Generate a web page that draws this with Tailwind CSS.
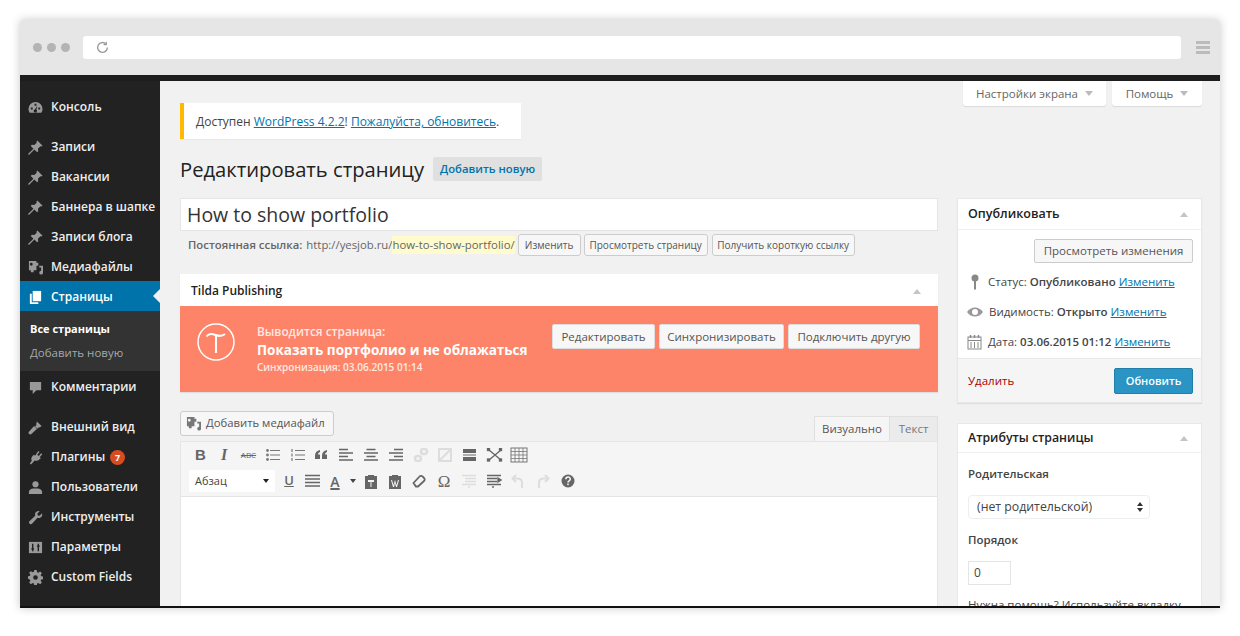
<!DOCTYPE html>
<html lang="en">
<head>
  <meta charset="UTF-8">
  <title>Редактировать страницу</title>
  <script src="https://cdn.jsdelivr.net/npm/@tailwindcss/browser@4"></script>
</head>
<body class="bg-white h-[636px] overflow-hidden font-['Open_Sans',sans-serif] text-[#444]">

  <div class="mx-5 mt-5 h-[588px] flex flex-col overflow-hidden rounded-t-[3px] border-b-2 border-[#111] shadow-[0_0_10px_rgba(0,0,0,0.22)]">

    <!-- Browser chrome -->
    <div class="h-[55px] shrink-0 bg-[#e6e6e6] flex items-center pl-[13px]">
      <div class="flex gap-[5px]">
        <span class="w-[9px] h-[9px] rounded-full bg-[#b4b4b4]"></span>
        <span class="w-[9px] h-[9px] rounded-full bg-[#b4b4b4]"></span>
        <span class="w-[9px] h-[9px] rounded-full bg-[#b4b4b4]"></span>
      </div>
      <div class="ml-[13px] w-[1098px] h-[23px] bg-white rounded-[3px] flex items-center pl-[13px]">
        <svg class="w-[13px] h-[13px]" viewBox="0 0 12 12" fill="none" stroke="#9a9a9a" stroke-width="1.300"><path d="M10.500 6a4.500 4.500 0 1 1-1.300-3.200"/><path d="M9.500 .8v2.600H7" stroke-width="1.100"/></svg>
      </div>
      <div class="ml-[15px] flex flex-col gap-[2px]">
        <span class="block w-[14px] h-[3px] bg-[#bbb]"></span>
        <span class="block w-[14px] h-[3px] bg-[#bbb]"></span>
        <span class="block w-[14px] h-[3px] bg-[#bbb]"></span>
      </div>
    </div>
    <div class="h-[6px] shrink-0 bg-[#1d1d1d]"></div>

    <div class="flex flex-1 min-h-0">
      <!-- Admin menu -->
      <nav class="w-[140px] shrink-0 bg-[#222] text-[12px] font-semibold text-[#eee] pt-[10px] whitespace-nowrap [&>a]:pt-[2px]">
        <a class="flex items-center h-[30px] pl-2 gap-[8px]">
          <svg class="w-[15px] h-[15px] shrink-0" viewBox="0 0 16 16" fill="#999"><path d="M8 2a7.500 7.500 0 0 0-7.500 7.500c0 1.600.5 3 1.300 4.200h12.400c.8-1.200 1.300-2.600 1.300-4.200A7.500 7.500 0 0 0 8 2zM7 4h2v2H7zM3 8h2v2H3zm8 0h2v2h-2zM7 13a1.500 1.500 0 0 1 .4-2.900L10 6l-1 4.500a1.500 1.500 0 0 1-2 2.500z"/></svg>
          <span>Консоль</span>
        </a>
        <div class="h-[10px]"></div>
        <a class="flex items-center h-[30px] pl-2 gap-[8px]">
          <svg class="w-[15px] h-[15px] shrink-0" viewBox="0 0 16 16" fill="#999"><path d="M10 .5l5.500 5.500-1.300 1-1-.3-2.600 2.600.3 2.600-1.200 1.200-2.900-2.900L1 16 0 15l5.800-5.800-2.900-2.900 1.200-1.200 2.600.3 2.600-2.600-.3-1z"/></svg>
          <span>Записи</span>
        </a>
        <a class="flex items-center h-[30px] pl-2 gap-[8px]">
          <svg class="w-[15px] h-[15px] shrink-0" viewBox="0 0 16 16" fill="#999"><path d="M10 .5l5.500 5.500-1.300 1-1-.3-2.600 2.600.3 2.600-1.200 1.200-2.900-2.900L1 16 0 15l5.800-5.800-2.900-2.900 1.200-1.200 2.600.3 2.600-2.600-.3-1z"/></svg>
          <span>Вакансии</span>
        </a>
        <a class="flex items-center h-[30px] pl-2 gap-[8px]">
          <svg class="w-[15px] h-[15px] shrink-0" viewBox="0 0 16 16" fill="#999"><path d="M10 .5l5.500 5.500-1.300 1-1-.3-2.600 2.600.3 2.600-1.200 1.200-2.900-2.900L1 16 0 15l5.800-5.800-2.900-2.900 1.200-1.200 2.600.3 2.600-2.600-.3-1z"/></svg>
          <span>Баннера в шапке</span>
        </a>
        <a class="flex items-center h-[30px] pl-2 gap-[8px]">
          <svg class="w-[15px] h-[15px] shrink-0" viewBox="0 0 16 16" fill="#999"><path d="M10 .5l5.500 5.500-1.300 1-1-.3-2.600 2.600.3 2.600-1.200 1.200-2.900-2.900L1 16 0 15l5.800-5.800-2.900-2.900 1.200-1.200 2.600.3 2.600-2.600-.3-1z"/></svg>
          <span>Записи блога</span>
        </a>
        <a class="flex items-center h-[30px] pl-2 gap-[8px]">
          <svg class="w-[15px] h-[15px] shrink-0" viewBox="0 0 16 16" fill="#999"><path fill-rule="evenodd" d="M1 1h8v2h2v3H9v5H6v2H3v-2H1zm2.500 2a1.500 1.500 0 1 0 0 3 1.500 1.500 0 0 0 0-3zM14 6h2v7.500a2 2 0 1 1-2-2V8h-2V6z"/></svg>
          <span>Медиафайлы</span>
        </a>
        <a class="relative flex items-center h-[30px] pl-2 gap-[8px] bg-[#0073aa] text-white">
          <svg class="w-[15px] h-[15px] shrink-0" viewBox="0 0 16 16" fill="#fff"><path d="M5 1h9v11H5z"/><path d="M2 4h2v9h7v2H2z"/></svg>
          <span>Страницы</span>
          <span class="absolute right-0 top-[8px] border-y-[7px] border-y-transparent border-r-[7px] border-r-[#f1f1f1]"></span>
        </a>
        <div class="h-[60px] bg-[#333] pl-[10px] pt-[6px]">
          <div class="h-6 leading-6 text-[11px] font-bold text-white">Все страницы</div>
          <div class="h-6 leading-6 text-[11.500px] font-normal text-[#a5a8aa]">Добавить новую</div>
        </div>
        <a class="flex items-center h-[30px] pl-2 gap-[8px]">
          <svg class="w-[15px] h-[15px] shrink-0" viewBox="0 0 16 16" fill="#999"><path d="M2 2h12v9H9l-4 4v-4H2z"/></svg>
          <span>Комментарии</span>
        </a>
        <div class="h-[10px]"></div>
        <a class="flex items-center h-[30px] pl-2 gap-[8px]">
          <svg class="w-[15px] h-[15px] shrink-0" viewBox="0 0 16 16" fill="#999"><path d="M9.500 1.500l5 5-2 1.500-1-.2-1.500 1.500-2.500-2.500 1.500-1.500-.2-1zM6.500 6.500l3 3L3 15.500 1 15l-.5-2z"/></svg>
          <span>Внешний вид</span>
        </a>
        <a class="flex items-center h-[30px] pl-2 gap-[8px]">
          <svg class="w-[15px] h-[15px] shrink-0" viewBox="0 0 16 16" fill="#999"><path d="M11 1l1.300 1-2.500 3 1.700 1.300L14 3.500l1.200 1-2.700 3.200 1.200 1L12 10c-1.500 1.500-3.500 2-5 1.200L4.500 14l-1.500 1.500-1-1 2-3c-.8-1.500-.5-3.500.8-5l1.500-1.500 1.200 1z"/></svg>
          <span>Плагины</span>
          <span class="-ml-[3px] w-[15px] h-[15px] rounded-full bg-[#d54e21] text-white text-[9px] font-bold leading-[15px] text-center">7</span>
        </a>
        <a class="flex items-center h-[30px] pl-2 gap-[8px]">
          <svg class="w-[15px] h-[15px] shrink-0" viewBox="0 0 16 16" fill="#999"><circle cx="8" cy="4.500" r="3.300"/><path d="M1 15v-2.500c0-2 2.500-3.500 4.500-3.500h5c2 0 4.500 1.500 4.500 3.500V15z"/></svg>
          <span>Пользователи</span>
        </a>
        <a class="flex items-center h-[30px] pl-2 gap-[8px]">
          <svg class="w-[15px] h-[15px] shrink-0" viewBox="0 0 16 16" fill="#999"><path d="M15 3.500c.6 2-.2 4-2 4.800-1 .4-2 .4-2.800 0L4.500 14.500a1.800 1.800 0 0 1-3-2.500L7.700 6c-.4-1-.3-2 .2-3C8.800 1.300 10.800.5 12.500 1.200L10 3.800l.4 2 2 .3z"/></svg>
          <span>Инструменты</span>
        </a>
        <a class="flex items-center h-[30px] pl-2 gap-[8px]">
          <svg class="w-[15px] h-[15px] shrink-0" viewBox="0 0 16 16"><rect x="1" y="2" width="14" height="12" fill="#999"/><path d="M5 4v8M11 4v8M3.500 9.500h3M9.500 6.500h3" stroke="#222" stroke-width="1.500"/></svg>
          <span>Параметры</span>
        </a>
        <a class="flex items-center h-[30px] pl-2 gap-[8px]">
          <svg class="w-[15px] h-[15px] shrink-0" viewBox="0 0 16 16" fill="#999"><path fill-rule="evenodd" d="M6.700 0h2.600l.4 2.300 1.300.6 2-1.300 1.800 1.800-1.300 2 .6 1.300 2.300.4v2.600l-2.300.4-.6 1.300 1.300 2-1.800 1.800-2-1.300-1.300.6-.4 2.300H6.700l-.4-2.300-1.300-.6-2 1.300-1.800-1.800 1.300-2-.6-1.300L-.4 9.300V6.700l2.300-.4.6-1.300-1.300-2 1.800-1.800 2 1.300 1.300-.6zM8 5.500a2.500 2.500 0 1 0 0 5 2.500 2.500 0 0 0 0-5z"/></svg>
          <span>Custom Fields</span>
        </a>
      </nav>

      <!-- Page content -->
      <main class="flex-1 min-w-0 bg-[#f1f1f1] pl-5 pr-[18px] relative text-[12px]">
        <div class="absolute right-[18px] top-0 flex gap-[6px] text-[11.500px] text-[#666]">
          <div class="w-[143px] h-[25px] bg-white rounded-b-[3px] shadow-[0_1px_1px_rgba(0,0,0,0.1)] flex items-center justify-center gap-[7px]">Настройки экрана <span class="border-x-[4px] border-x-transparent border-t-[5px] border-t-[#bbb]"></span></div>
          <div class="w-[90px] h-[25px] bg-white rounded-b-[3px] shadow-[0_1px_1px_rgba(0,0,0,0.1)] flex items-center justify-center gap-[7px]">Помощь <span class="border-x-[4px] border-x-transparent border-t-[5px] border-t-[#bbb]"></span></div>
        </div>

        <!-- Update notice -->
        <div class="mt-[22px] w-[341px] h-9 bg-white border-l-4 border-[#ffb900] pl-3 pt-[2px] flex items-center shadow-[0_1px_1px_rgba(0,0,0,0.04)] whitespace-nowrap">
          <span>Доступен <a class="underline text-[#0073aa]">WordPress 4.2.2</a>! <a class="underline text-[#0073aa]">Пожалуйста, обновитесь</a>.</span>
        </div>

        <div class="mt-[18px] h-[24px] flex items-center">
          <h1 class="text-[20.200px] text-[#222] leading-[26px]">Редактировать страницу</h1>
          <a class="ml-[9px] w-[109px] h-6 bg-[#e0e0e0] text-[#0073aa] text-[11.300px] font-semibold rounded-[2px] flex items-center justify-center">Добавить новую</a>
        </div>

        <div class="mt-[17px] flex gap-[19px] items-start">
          <!-- Left column -->
          <div class="w-[758px] shrink-0">
            <div class="h-[33px] bg-white border border-[#e5e5e5] pl-[6px] text-[19.500px] leading-[31px] text-[#333]">How to show portfolio</div>

            <div class="mt-[2px] pl-2 h-6 flex items-center text-[#666] text-[11.350px] whitespace-nowrap">
              <b class="font-semibold">Постоянная ссылка:</b>
              <span class="ml-1">http://yesjob.ru/</span><span class="bg-[#fffbcc]">how-to-show-portfolio/</span>
              <a class="ml-[3px] w-[63px] h-[22px] bg-[#f7f7f7] border border-[#ccc] rounded-[3px] text-[10px] text-[#555] flex items-center justify-center">Изменить</a>
              <a class="ml-[3px] w-[124px] h-[22px] bg-[#f7f7f7] border border-[#ccc] rounded-[3px] text-[10px] text-[#555] flex items-center justify-center">Просмотреть страницу</a>
              <a class="ml-1 w-[143px] h-[22px] bg-[#f7f7f7] border border-[#ccc] rounded-[3px] text-[10px] text-[#555] flex items-center justify-center">Получить короткую ссылку</a>
            </div>

            <!-- Tilda box -->
            <section class="mt-[17px] shadow-[0_1px_1px_rgba(0,0,0,0.08)]">
              <div class="h-8 bg-white flex items-center justify-between pt-[2px] pl-[11px] pr-[17px]">
                <h2 class="font-semibold text-[12px] text-[#222]">Tilda Publishing</h2>
                <span class="border-x-[4px] border-x-transparent border-b-[5px] border-b-[#c4c4c4]"></span>
              </div>
              <div class="h-[86px] bg-[#fd8468] flex items-start pt-[17px] pl-[17px] pr-[18px] text-white">
                <svg class="w-[38px] h-[38px] shrink-0" viewBox="0 0 38 38" fill="none" stroke="#fff" stroke-width="1.500"><circle cx="19" cy="19" r="18"/><path d="M19 12.500V30" stroke-width="2"/><path d="M9.500 13.500c2-3 5-3 9-1.500s6.500 1.500 9.500-1" stroke-width="2"/></svg>
                <div class="ml-[22px] flex-1 font-semibold">
                  <div class="text-[11.800px] leading-[17px] text-[#ffe9e2]">Выводится страница:</div>
                  <div class="text-[13.500px] font-bold leading-[20px] whitespace-nowrap">Показать портфолио и не облажаться</div>
                  <div class="text-[10px] leading-[15px] text-[#ffe9e2]">Синхронизация: 03.06.2015 01:14</div>
                </div>
                <div class="flex gap-1 text-[11.500px] text-[#555] mt-[1px]">
                  <a class="w-[103px] h-[25px] bg-[#f7f7f7] border border-[#ddd] rounded-[2px] flex items-center justify-center">Редактировать</a>
                  <a class="w-[125px] h-[25px] bg-[#f7f7f7] border border-[#ddd] rounded-[2px] flex items-center justify-center">Синхронизировать</a>
                  <a class="w-[132px] h-[25px] bg-[#f7f7f7] border border-[#ddd] rounded-[2px] flex items-center justify-center">Подключить другую</a>
                </div>
              </div>
            </section>

            <!-- Editor -->
            <div class="mt-[19px] h-[30px] flex justify-between items-start">
              <a class="w-[154px] h-[25px] bg-[#f7f7f7] border border-[#ccc] rounded-[3px] flex items-center pl-[5px] gap-[5px] text-[11.300px] text-[#555]">
                <svg class="w-[15px] h-[15px] shrink-0" viewBox="0 0 16 16" fill="#777"><path fill-rule="evenodd" d="M1 1h8v2h2v3H9v5H6v2H3v-2H1zm2.500 2a1.500 1.500 0 1 0 0 3 1.500 1.500 0 0 0 0-3zM14 6h2v7.500a2 2 0 1 1-2-2V8h-2V6z"/></svg>
                Добавить медиафайл
              </a>
              <div class="flex mt-[5px] text-[11.500px] h-[25px]">
                <span class="w-[76px] bg-[#f5f5f5] border border-[#e0e0e0] border-b-0 flex items-center justify-center text-[#555]">Визуально</span>
                <span class="w-[48px] bg-[#ebebeb] border-t border-r border-[#e0e0e0] flex items-center justify-center text-[#777]">Текст</span>
              </div>
            </div>
            <div class="h-[56px] bg-[#f5f5f5] border border-[#e5e5e5] pl-2">
              <div class="h-[26px] flex items-center text-[#666]">
                <span class="w-[23px] text-center font-['Liberation_Sans',sans-serif] font-bold text-[15px]">B</span>
                <span class="w-[24px] text-center font-['Liberation_Serif',serif] font-bold italic text-[16px]">I</span>
                <span class="w-[25px] text-center text-[8px] line-through">ABC</span>
                <svg class="w-[26px] h-[14px]" viewBox="0 0 26 14" stroke="#777" stroke-width="1.200" fill="#777"><path d="M9 2.500h10M9 7h10M9 11.500h10" fill="none"/><circle cx="6.500" cy="2.500" r=".8"/><circle cx="6.500" cy="7" r=".8"/><circle cx="6.500" cy="11.500" r=".8"/></svg>
                <svg class="w-[24px] h-[14px]" viewBox="0 0 24 14" stroke="#777" stroke-width="1.200" fill="none"><path d="M8 2.500h10M8 7h10M8 11.500h10M5 1v3M5 5.500v3M5 10v3"/></svg>
                <svg class="w-[22px] h-[14px]" viewBox="0 0 22 14" fill="#666"><path d="M4 7.500C4 4.500 6 2.500 9 2v2C7.800 4.400 7 5.200 7 6.500h2V11H4zM11 7.500c0-3 2-5 5-5.500v2c-1.200.4-2 1.200-2 2.500h2V11h-5z"/></svg>
                <svg class="w-[26px] h-[14px]" viewBox="0 0 26 14" stroke="#666" stroke-width="1.400"><path d="M6 1.500h9M6 5h14M6 8.500h9M6 12h14"/></svg>
                <svg class="w-[24px] h-[14px]" viewBox="0 0 24 14" stroke="#666" stroke-width="1.400"><path d="M7.500 1.500h9M5 5h14M7.500 8.500h9M5 12h14"/></svg>
                <svg class="w-[26px] h-[14px]" viewBox="0 0 26 14" stroke="#666" stroke-width="1.400"><path d="M11 1.500h9M6 5h14M11 8.500h9M6 12h14"/></svg>
                <svg class="w-[24px] h-[14px]" viewBox="0 0 24 14" stroke="#ddd" stroke-width="2.500" fill="none"><rect x="12" y="1" width="6" height="5" rx="2.500"/><rect x="6" y="8" width="6" height="5" rx="2.500"/></svg>
                <svg class="w-[24px] h-[14px]" viewBox="0 0 24 14" stroke="#ddd" stroke-width="2" fill="none"><path d="M6 1h12v12H6zM6 13L18 1"/></svg>
                <svg class="w-[25px] h-[14px] ml-[1px]" viewBox="0 0 25 14" fill="#666"><rect x="5" y="1" width="13" height="4"/><rect x="5" y="9" width="13" height="4"/><path d="M5 6.500h13v1H5z"/></svg>
                <svg class="w-[25px] h-[14px]" viewBox="0 0 25 14" stroke="#666" stroke-width="1.300" fill="#666"><path d="M6 2l12 10M18 2L6 12" /><rect x="4.500" y=".5" width="2" height="2"/><rect x="16.500" y=".5" width="2" height="2"/><rect x="4.500" y="11" width="2" height="2"/><rect x="16.500" y="11" width="2" height="2"/></svg>
                <svg class="w-[20px] h-[16px] ml-[1px]" viewBox="0 0 20 16" fill="none" stroke="#777"><rect x="2" y="1" width="16" height="14"/><path d="M2 4.500h16M2 8h16M2 11.500h16M6 1v14M10 1v14M14 1v14" stroke-width=".8"/></svg>
              </div>
              <div class="h-[26px] flex items-center text-[#666]">
                <div class="w-[86px] h-[22px] bg-white flex items-center justify-between px-[6px] text-[11px] text-[#444]">Абзац <span class="border-x-[3.500px] border-x-transparent border-t-[4px] border-t-[#222]"></span></div>
                <span class="ml-[4px] w-[20px] text-center text-[13px] underline font-semibold">U</span>
                <svg class="ml-[2px] w-[24px] h-[14px]" viewBox="0 0 24 14" stroke="#666" stroke-width="1.400"><path d="M4 1.500h15M4 5h15M4 8.500h15M4 12h15"/></svg>
                <span class="w-[20px] text-center text-[14px] font-semibold underline decoration-2">A</span>
                <span class="ml-[5px] border-x-[3.500px] border-x-transparent border-t-[4px] border-t-[#444]"></span>
                <svg class="ml-[7px] w-[16px] h-[15px]" viewBox="0 0 16 15" fill="#666"><path fill-rule="evenodd" d="M2 2h3V1h6v1h3v13H2zm3 4v2h2.500v5h1V8H11V6z"/></svg>
                <svg class="ml-[8px] w-[16px] h-[15px]" viewBox="0 0 16 15" fill="#666"><path fill-rule="evenodd" d="M2 2h3V1h6v1h3v13H2zm2 4l2 7h1l1-4 1 4h1l2-7h-1l-1.500 5L8 6 6.500 11 5 6z"/></svg>
                <svg class="ml-[8px] w-[16px] h-[14px]" viewBox="0 0 16 14" fill="none" stroke="#666" stroke-width="1.800"><path d="M2.500 9l6-6.500a2 2 0 0 1 3 0l1.500 1.500a2 2 0 0 1 0 3l-6 5.500H5z"/></svg>
                <span class="ml-[9px] w-[16px] text-center font-['Liberation_Serif',serif] text-[17px] leading-none">Ω</span>
                <svg class="ml-[9px] w-[16px] h-[14px]" viewBox="0 0 16 14" stroke="#ddd" stroke-width="1.400"><path d="M1 1.500h14M4 4.500h11M4 7.500h11M1 10.500h14M8 12v2"/></svg>
                <svg class="ml-[9px] w-[16px] h-[14px]" viewBox="0 0 16 14" stroke="#666" stroke-width="1.400"><path d="M1 1.500h14M1 4.500h10M1 7.500h10M1 10.500h14M7 12v2"/><path d="M12 4l3 2-3 2z" fill="#666"/></svg>
                <svg class="ml-[8px] w-[16px] h-[14px]" viewBox="0 0 16 14" fill="none" stroke="#ddd" stroke-width="2"><path d="M12 14V8.500C12 6 10 4.500 7 4.500H3"/><path d="M6 1L2.500 4.500 6 8"/></svg>
                <svg class="ml-[9px] w-[16px] h-[14px]" viewBox="0 0 16 14" fill="none" stroke="#ddd" stroke-width="2"><path d="M4 14V8.500C4 6 6 4.500 9 4.500h4"/><path d="M10 1l3.500 3.500L10 8"/></svg>
                <svg class="ml-[10px] w-[14px] h-[14px]" viewBox="0 0 14 14"><circle cx="7" cy="7" r="6.500" fill="#666"/><path d="M4.800 5.300c0-3 4.500-3 4.500-.2 0 1.700-2.300 1.700-2.300 3.400" fill="none" stroke="#f5f5f5" stroke-width="1.500"/><rect x="6.200" y="9.500" width="1.600" height="1.600" fill="#f5f5f5"/></svg>
              </div>
            </div>
            <div class="h-[140px] bg-white border-x border-[#e5e5e5]"></div>
          </div>

          <!-- Right column -->
          <aside class="w-[245px] shrink-0 text-[11.500px]">
            <section class="bg-white shadow-[0_1px_1px_rgba(0,0,0,0.08)] border border-[#e8e8e8]">
              <div class="h-[31px] flex items-center justify-between pl-[10px] pr-[13px] border-b border-[#f0f0f0]">
                <h2 class="font-semibold text-[12.500px] text-[#222]">Опубликовать</h2>
                <span class="border-x-[4px] border-x-transparent border-b-[5px] border-b-[#c4c4c4]"></span>
              </div>
              <div class="pt-[9px] h-[128px]">
                <div class="flex justify-end pr-2">
                  <a class="w-[159px] h-6 bg-[#f7f7f7] border border-[#ccc] rounded-[2px] text-[#555] flex items-center justify-center">Просмотреть изменения</a>
                </div>
                <div class="mt-[4px] h-[30px] flex items-center pl-[9px]">
                  <svg class="w-[16px] h-[16px] shrink-0" viewBox="0 0 16 16" fill="#888"><circle cx="8" cy="4" r="3.500"/><rect x="7" y="7" width="2" height="8.500"/></svg>
                  <span class="ml-[5px] whitespace-nowrap">Статус: <b class="font-semibold">Опубликовано</b> <a class="underline text-[#0073aa]">Изменить</a></span>
                </div>
                <div class="h-[30px] flex items-center pl-[9px]">
                  <svg class="w-[16px] h-[16px] shrink-0" viewBox="0 0 16 16" fill="#999"><path fill-rule="evenodd" d="M0 8c2-3 5-4.500 8-4.500S14 5 16 8c-2 3-5 4.500-8 4.500S2 11 0 8zm8-3a3 3 0 1 0 0 6 3 3 0 0 0 0-6z"/></svg>
                  <span class="ml-[6px] whitespace-nowrap">Видимость: <b class="font-semibold">Открыто</b> <a class="underline text-[#0073aa]">Изменить</a></span>
                </div>
                <div class="h-[30px] flex items-center pl-[9px]">
                  <svg class="w-[15px] h-[16px] shrink-0" viewBox="0 0 15 16" fill="none" stroke="#888"><rect x="1" y="3" width="13" height="12"/><path d="M1 6.500h13M4 8v6M7.500 8v6M11 8v6"/><path d="M3.500 1v3M7.500 1v3M11.500 1v3" stroke-width="1.500"/></svg>
                  <span class="ml-[6px] whitespace-nowrap">Дата: <b class="font-semibold">03.06.2015 01:12</b> <a class="underline text-[#0073aa]">Изменить</a></span>
                </div>
              </div>
              <div class="h-[44px] bg-[#f5f5f5] border-t border-[#e8e8e8] flex items-center justify-between pl-[10px] pr-2">
                <a class="text-[#a00]">Удалить</a>
                <a class="w-[79px] h-[26px] mt-[1px] bg-[#2a95c5] border border-[#1f7fa8] rounded-[2px] text-white text-[11px] font-semibold flex items-center justify-center">Обновить</a>
              </div>
            </section>

            <section class="mt-5 bg-white border border-[#e8e8e8] h-[190px] overflow-hidden">
              <div class="h-[29px] flex items-center justify-between pl-[10px] pr-[13px] border-b border-[#f0f0f0]">
                <h2 class="font-semibold text-[12.300px] text-[#222]">Атрибуты страницы</h2>
                <span class="border-x-[4px] border-x-transparent border-b-[5px] border-b-[#c4c4c4]"></span>
              </div>
              <div class="pl-[10px]">
                <div class="mt-[12px] font-semibold text-[11.500px] leading-[17px]">Родительская</div>
                <div class="mt-[13px] w-[182px] h-6 bg-white rounded-[4px] border border-[#eee] text-[12.300px] flex items-center justify-between pl-2 pr-[6px]">
                  (нет родительской)
                  <span class="flex flex-col gap-[2px]">
                    <span class="border-x-[3px] border-x-transparent border-b-[4px] border-b-[#333]"></span>
                    <span class="border-x-[3px] border-x-transparent border-t-[4px] border-t-[#333]"></span>
                  </span>
                </div>
                <div class="mt-[12px] font-semibold text-[11.500px] leading-[17px]">Порядок</div>
                <div class="mt-[13px] w-[43px] h-6 bg-white border border-[#e5e5e5] flex items-center pl-[5px] text-[12px]">0</div>
                <div class="mt-[11px] whitespace-nowrap leading-[17px]">Нужна помощь? Используйте вкладку</div>
              </div>
            </section>
          </aside>
        </div>
      </main>
    </div>
  </div>
</body>
</html>
